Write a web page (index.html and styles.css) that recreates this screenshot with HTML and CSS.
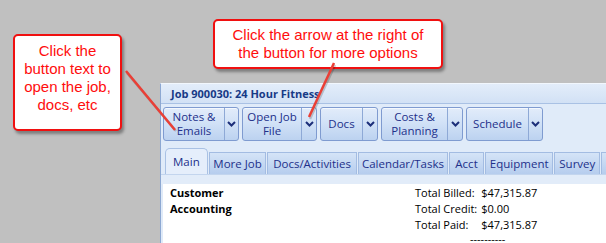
FILE: index.html
```html
<!DOCTYPE html>
<html>
<head>
<meta charset="utf-8">
<link rel="stylesheet" href="styles.css">
</head>
<body>
<div class="stage">
  <div class="window">
    <div class="titlebar">Job 900030: 24 Hour Fitness</div>
    <div class="toolbar">
      <div class="split"><span class="main w-notes">Notes &amp;<br>Emails</span><span class="drop"><svg width="9" height="6" viewBox="0 0 9 6"><polyline points="1,1 4.5,4.5 8,1" fill="none" stroke="#1c2f7a" stroke-width="2"/></svg></span></div>
      <div class="split"><span class="main w-open">Open Job<br>File</span><span class="drop wide"><svg width="9" height="6" viewBox="0 0 9 6"><polyline points="1,1 4.5,4.5 8,1" fill="none" stroke="#1c2f7a" stroke-width="2"/></svg></span></div>
      <div class="split"><span class="main w-docs">Docs</span><span class="drop wide"><svg width="9" height="6" viewBox="0 0 9 6"><polyline points="1,1 4.5,4.5 8,1" fill="none" stroke="#1c2f7a" stroke-width="2"/></svg></span></div>
      <div class="split"><span class="main w-costs">Costs &amp;<br>Planning</span><span class="drop wide"><svg width="9" height="6" viewBox="0 0 9 6"><polyline points="1,1 4.5,4.5 8,1" fill="none" stroke="#1c2f7a" stroke-width="2"/></svg></span></div>
      <div class="split"><span class="main w-sched">Schedule</span><span class="drop"><svg width="9" height="6" viewBox="0 0 9 6"><polyline points="1,1 4.5,4.5 8,1" fill="none" stroke="#1c2f7a" stroke-width="2"/></svg></span></div>
    </div>
    <div class="tabstrip">
      <span class="tab active t-main">Main</span>
      <span class="tab t-more">More Job</span>
      <span class="tab t-docs">Docs/Activities</span>
      <span class="tab t-cal">Calendar/Tasks</span>
      <span class="tab t-acct">Acct</span>
      <span class="tab t-equip">Equipment</span>
      <span class="tab t-survey">Survey</span>
      <span class="tab t-next">&nbsp;</span>
    </div>
    <div class="tabgap"></div>
    <div class="content">
      <div class="heads">
        <div>Customer</div>
        <div>Accounting</div>
      </div>
      <div class="totals">
        <span>Total Billed:</span><span>$47,315.87</span>
        <span>Total Credit:</span><span>$0.00</span>
        <span>Total Paid:</span><span>$47,315.87</span>
        <span class="dashes">----------</span>
      </div>
    </div>
  </div>

  <div class="callout c-left">Click the<br>button text to<br>open the job,<br>docs, etc</div>
  <div class="callout c-top">Click the arrow at the right of<br>the button for more options</div>

  <svg class="pointers" width="606" height="243" viewBox="0 0 606 243">
    <line x1="127" y1="73" x2="176" y2="131" stroke="rgba(0,0,0,0.18)" stroke-width="2.5"/>
    <line x1="335" y1="65" x2="310" y2="119" stroke="rgba(0,0,0,0.18)" stroke-width="2.5"/>
    <line x1="126" y1="71" x2="175" y2="130" stroke="#ea3f36" stroke-width="2.5"/>
    <line x1="334" y1="63" x2="309" y2="117" stroke="#ea3f36" stroke-width="2.5"/>
  </svg>
</div>
</body>
</html>
```

FILE: styles.css
```css
html, body {
  margin: 0;
  padding: 0;
  background: #c0c0c0;
  overflow: hidden;
}

.stage {
  position: relative;
  width: 606px;
  height: 243px;
  overflow: hidden;
}

.window {
  margin: 83px 0 0 160px;
  width: 470px;
  height: 170px;
  border-left: 1px solid #8da8d2;
  border-top: 1px solid #f2f7fd;
  background: #dfeaf8;
  font-family: "Open Sans", "Noto Sans", sans-serif;
  color: #22308a;
}

.titlebar {
  height: 19px;
  line-height: 19px;
  padding-left: 10px;
  font-size: 11px;
  font-weight: bold;
  color: #173a86;
  background: linear-gradient(#e3edfa, #d2e1f5);
  border-bottom: 1px solid #a9c1e4;
}

.toolbar {
  display: flex;
  gap: 3px;
  padding: 3px 0 0 2px;
  height: 38px;
  background: #e0ebf9;
  box-sizing: content-box;
}

.split {
  display: flex;
  height: 34px;
  border: 1px solid #7f9bd0;
  border-radius: 3px;
  box-sizing: border-box;
  background: linear-gradient(#e2ecfa 0%, #d2e2f7 45%, #bcd2f0 100%);
  box-shadow: inset 0 1px 0 #f4f8fe;
}

.main {
  display: flex;
  align-items: center;
  justify-content: center;
  text-align: center;
  font-size: 11.5px;
  line-height: 14px;
  border-right: 1px solid #8ea9d6;
}

.w-notes { width: 60px; }
.w-open { width: 58px; }
.w-docs { width: 41px; }
.w-costs { width: 65px; }
.w-sched { width: 61px; }

.drop {
  width: 13px;
  display: flex;
  align-items: center;
  justify-content: center;
}
.drop.wide { width: 14px; }

.tabstrip {
  display: flex;
  align-items: flex-end;
  gap: 1px;
  height: 29px;
  padding-left: 4px;
  background: #e0ebf9;
  box-sizing: border-box;
}

.tab {
  height: 22px;
  line-height: 21px;
  font-size: 11.5px;
  text-align: center;
  border: 1px solid #a3bce2;
  border-bottom: none;
  box-sizing: border-box;
  background: linear-gradient(#d5e4f7, #b6cdee);
  color: #22308a;
}

.tab.active {
  height: 26px;
  line-height: 25px;
  border-radius: 5px 5px 0 0;
  background: #e5eefb;
  border-color: #a9c1e4;
}

.t-main { width: 43px; }
.t-more { width: 58px; }
.t-docs { width: 90px; }
.t-cal { width: 91px; }
.t-acct { width: 35px; }
.t-equip { width: 69px; }
.t-survey { width: 46px; }
.t-next { width: 30px; }

.tabgap {
  height: 10px;
  background: #e2ecf9;
  border-top: 1px solid #c3d5ee;
  box-sizing: border-box;
}

.content {
  margin-left: 2px;
  height: 60px;
  background: #ffffff;
  display: grid;
  grid-template-columns: 245px auto;
  padding: 1px 0 0 7px;
  color: #000;
  font-size: 11px;
}

.heads {
  font-weight: bold;
  line-height: 16px;
}

.totals {
  display: grid;
  grid-template-columns: auto auto;
  justify-content: start;
  column-gap: 4px;
  line-height: 15.3px;
}

.dashes {
  grid-column: 1 / span 2;
  padding-left: 55px;
  line-height: 10px;
  margin-top: 1px;
}

.callout {
  position: absolute;
  background: #fff;
  border: 2px solid #f01010;
  border-radius: 5px;
  box-shadow: 2px 3px 3px rgba(0, 0, 0, 0.35);
  color: #ff0d0d;
  font-family: "Liberation Sans", Arial, sans-serif;
  font-size: 15px;
  line-height: 18px;
  text-align: center;
  box-sizing: border-box;
}

.c-left {
  left: 13px;
  top: 34px;
  width: 109px;
  height: 97px;
  padding-top: 6px;
}

.c-top {
  left: 213px;
  top: 19px;
  width: 230px;
  height: 50px;
  padding-top: 5px;
}

.pointers {
  position: absolute;
  left: 0;
  top: 0;
}
```
